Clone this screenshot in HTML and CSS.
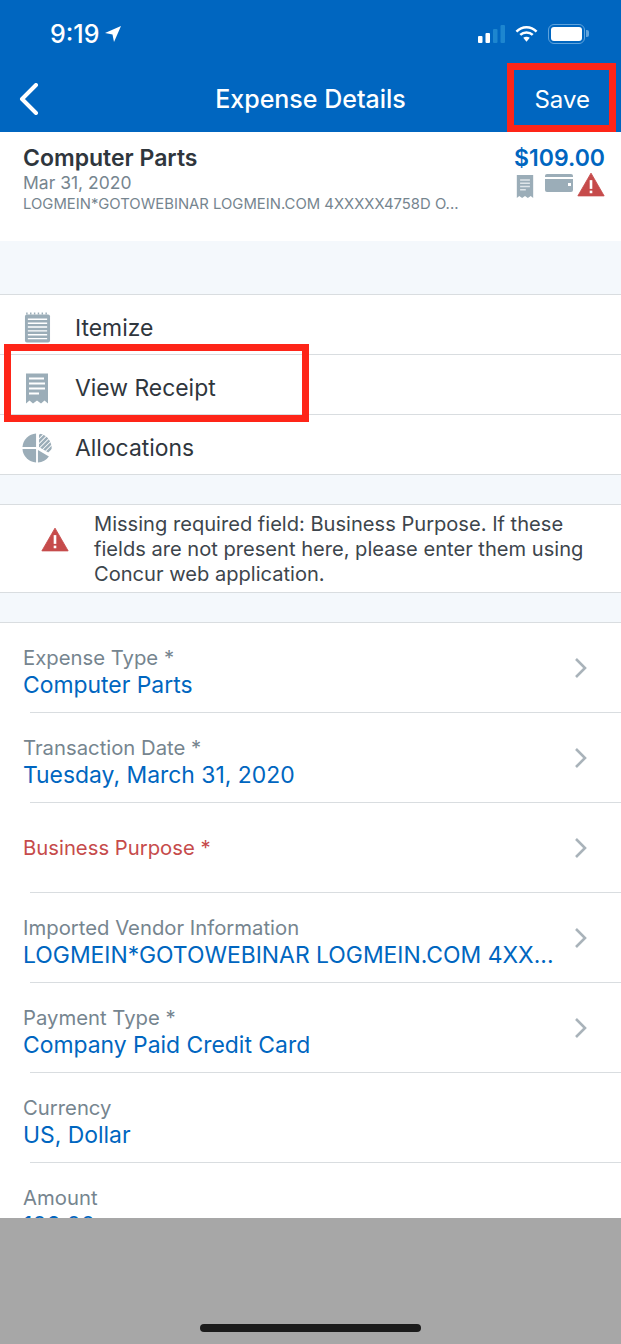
FILE: index.html
```html
<!DOCTYPE html>
<html lang="en">
<head>
    <meta charset="UTF-8">
    <meta name="viewport" content="width=device-width, initial-scale=1.0">
    <title>Expense Details</title>
    <link rel="stylesheet" href="styles.css">
</head>
<body>
    <div class="screen">
        <!-- Blue top bar -->
        <div class="top-bar">
            <div class="status-bar">
                <div class="status-time">
                    <span>9:19</span>
                    <svg class="icon-location" viewBox="0 0 16 16"><path d="M16 0 L0 7 L7.500 8.500 L9 16 Z" fill="#fff"/></svg>
                </div>
                <div class="status-icons">
                    <svg width="27" height="18" viewBox="0 0 27 18">
                        <rect x="0" y="11" width="4.500" height="7" rx="1" fill="#fff"/>
                        <rect x="7.500" y="8" width="4.500" height="10" rx="1" fill="#fff"/>
                        <rect x="15" y="4" width="4.500" height="14" rx="1" fill="#1d86cf"/>
                        <rect x="22.500" y="0" width="4.500" height="18" rx="1" fill="#1d86cf"/>
                    </svg>
                    <svg width="23" height="18" viewBox="0 0 24 18">
                        <path d="M1.500 6.500 C7.500 .5 16.500 .5 22.500 6.500" fill="none" stroke="#fff" stroke-width="2.600"/>
                        <path d="M5.500 10 C9 6.500 15 6.500 18.500 10" fill="none" stroke="#fff" stroke-width="2.600"/>
                        <path d="M8.600 13 C10.400 11.400 13.600 11.400 15.400 13 L12 17 Z" fill="#fff"/>
                    </svg>
                    <div class="battery"><div class="battery-fill"></div></div>
                </div>
            </div>
            <div class="nav-bar">
                <svg class="icon-back" viewBox="0 0 20 32"><path d="M17 2 L3 16 L17 30" fill="none" stroke="#fff" stroke-width="4" stroke-linecap="round" stroke-linejoin="round"/></svg>
                <h1>Expense Details</h1>
                <span class="nav-save">Save</span>
            </div>
        </div>

        <div class="content">
            <!-- Expense summary -->
            <div class="summary">
                <div class="summary-left">
                    <div class="summary-title">Computer Parts</div>
                    <div class="summary-date">Mar 31, 2020</div>
                    <div class="summary-desc">LOGMEIN*GOTOWEBINAR LOGMEIN.COM 4XXXXX4758D O...</div>
                </div>
                <div class="summary-right">
                    <div class="summary-amount">$109.00</div>
                    <div class="summary-icons">
                        <svg class="summary-receipt" width="18" height="25" viewBox="0 0 22 30">
                            <path d="M1 1 H21 V29 L18 26.500 L14.500 29 L11 26.500 L7.500 29 L4 26.500 L1 29 Z" fill="#9badb8"/>
                            <path d="M5 7 H17 M5 11 H17 M5 15 H17 M5 19 H12" stroke="#dfe5e9" stroke-width="1.800"/>
                        </svg>
                        <svg class="summary-card" width="28" height="18" viewBox="0 0 28 18">
                            <rect x="0" y="0" width="28" height="18" rx="2" fill="#9badb8"/>
                            <rect x="0" y="3" width="28" height="2" fill="#fff"/>
                            <rect x="23" y="9" width="3" height="3" fill="#fff"/>
                        </svg>
                        <svg class="summary-warn" width="28" height="25" viewBox="0 0 32 28">
                            <path d="M16 1 L31 27 H1 Z" fill="#c64b4b" stroke="#c64b4b" stroke-linejoin="round"/>
                            <rect x="14.500" y="9" width="3" height="10" fill="#fff"/>
                            <rect x="14.500" y="21" width="3" height="3" fill="#fff"/>
                        </svg>
                    </div>
                </div>
            </div>

            <div class="band band-top"></div>

            <!-- Actions -->
            <div class="actions">
                <div class="action-row">
                    <div class="action-icon">
                        <svg width="27" height="32" viewBox="0 0 28 32">
                            <rect x="1" y="2" width="26" height="29" rx="2" fill="#9badb8"/>
                            <path d="M3 2 V0 M7 2 V0 M11 2 V0 M15 2 V0 M19 2 V0 M23 2 V0" stroke="#9badb8" stroke-width="1.500"/>
                            <path d="M4 7 H24 M4 11 H24 M4 15 H24 M4 19 H24 M4 23 H24 M4 27 H24" stroke="#fff" stroke-width="1.500"/>
                        </svg>
                    </div>
                    <span>Itemize</span>
                </div>
                <div class="action-row">
                    <div class="action-icon">
                        <svg width="22" height="31" viewBox="0 0 22 30">
                            <path d="M0 0 H22 V30 L18.500 27 L15 30 L11 27 L7 30 L3.500 27 L0 30 Z" fill="#9badb8"/>
                            <path d="M3 5 H18 M3 10 H19 M3 15 H19 M3 20 H13" stroke="#fff" stroke-width="1.800"/>
                        </svg>
                    </div>
                    <span>View Receipt</span>
                </div>
                <div class="action-row action-row-pie">
                    <div class="action-icon">
                        <svg width="32" height="32" viewBox="0 0 32 32">
                            <defs>
                                <clipPath id="pieHatch"><path d="M18 .6 A15.500 15.500 0 0 1 30.400 22 L18 15 Z"/></clipPath>
                            </defs>
                            <path d="M15 .5 V15 H.5 A15.500 15.500 0 0 1 15 .5 Z" fill="#9badb8"/>
                            <path d="M.5 17 H15 V31.500 A15.500 15.500 0 0 1 .5 17 Z" fill="#9badb8"/>
                            <path d="M17 18 V31.500 A15.500 15.500 0 0 0 28.700 25 Z" fill="#9badb8"/>
                            <g clip-path="url(#pieHatch)">
                                <path d="M10 12 L22 0 M10 17 L27 0 M10 22 L32 0 M15 22 L37 0 M20 22 L42 0 M25 22 L47 0" stroke="#9badb8" stroke-width="2.600"/>
                            </g>
                        </svg>
                    </div>
                    <span>Allocations</span>
                </div>
            </div>

            <div class="band band-small"></div>

            <!-- Warning -->
            <div class="warning">
                <svg class="warning-icon" width="28" height="25" viewBox="0 0 32 28">
                    <path d="M16 1 L31 27 H1 Z" fill="#c64b4b" stroke="#c64b4b" stroke-linejoin="round"/>
                    <rect x="14.500" y="9" width="3" height="10" fill="#fff"/>
                    <rect x="14.500" y="21" width="3" height="3" fill="#fff"/>
                </svg>
                <p>Missing required field: Business Purpose. If these fields are not present here, please enter them using Concur web application.</p>
            </div>

            <div class="band band-small"></div>

            <!-- Fields -->
            <div class="fields">
                <div class="field">
                    <div class="field-text">
                        <div class="field-label">Expense Type *</div>
                        <div class="field-value">Computer Parts</div>
                    </div>
                    <svg class="chevron" viewBox="0 0 14 22"><path d="M2 2 L11 11 L2 20" fill="none" stroke="#a9b3ba" stroke-width="2.600"/></svg>
                </div>
                <div class="field">
                    <div class="field-text">
                        <div class="field-label">Transaction Date *</div>
                        <div class="field-value">Tuesday, March 31, 2020</div>
                    </div>
                    <svg class="chevron" viewBox="0 0 14 22"><path d="M2 2 L11 11 L2 20" fill="none" stroke="#a9b3ba" stroke-width="2.600"/></svg>
                </div>
                <div class="field">
                    <div class="field-text field-text-single">
                        <div class="field-label field-required">Business Purpose *</div>
                    </div>
                    <svg class="chevron" viewBox="0 0 14 22"><path d="M2 2 L11 11 L2 20" fill="none" stroke="#a9b3ba" stroke-width="2.600"/></svg>
                </div>
                <div class="field">
                    <div class="field-text">
                        <div class="field-label">Imported Vendor Information</div>
                        <div class="field-value">LOGMEIN*GOTOWEBINAR LOGMEIN.COM 4XX...</div>
                    </div>
                    <svg class="chevron" viewBox="0 0 14 22"><path d="M2 2 L11 11 L2 20" fill="none" stroke="#a9b3ba" stroke-width="2.600"/></svg>
                </div>
                <div class="field">
                    <div class="field-text">
                        <div class="field-label">Payment Type *</div>
                        <div class="field-value">Company Paid Credit Card</div>
                    </div>
                    <svg class="chevron" viewBox="0 0 14 22"><path d="M2 2 L11 11 L2 20" fill="none" stroke="#a9b3ba" stroke-width="2.600"/></svg>
                </div>
                <div class="field">
                    <div class="field-text">
                        <div class="field-label">Currency</div>
                        <div class="field-value">US, Dollar</div>
                    </div>
                </div>
                <div class="field">
                    <div class="field-text">
                        <div class="field-label">Amount</div>
                        <div class="field-value">109.00</div>
                    </div>
                </div>
            </div>
        </div>

        <div class="bottom-area">
            <div class="home-bar"></div>
        </div>

        <!-- Red annotation boxes -->
        <div class="mark mark-save"></div>
        <div class="mark mark-receipt"></div>
    </div>
</body>
</html>
```

FILE: styles.css
```css
* {
    box-sizing: border-box;
}

body {
    margin: 0;
    font-family: Inter, "Noto Sans", sans-serif;
    background-color: #fff;
}

.screen {
    position: relative;
    width: 621px;
    height: 1344px;
    display: flex;
    flex-direction: column;
    overflow: hidden;
}

.top-bar {
    height: 132px;
    flex-shrink: 0;
    background-color: #0066c0;
    color: #fff;
}

.status-bar {
    height: 66px;
    display: flex;
    justify-content: space-between;
    align-items: center;
    padding: 2px 36px 0 50px;
}

.status-time {
    display: flex;
    align-items: center;
    gap: 6px;
    font-size: 25px;
    font-weight: 500;
}

.icon-location {
    width: 16px;
    height: 16px;
}

.status-icons {
    display: flex;
    align-items: center;
    gap: 10px;
}

.battery {
    position: relative;
    width: 37px;
    height: 20px;
    border: 1.5px solid #5fa3dc;
    border-radius: 6px;
    padding: 2px;
}

.battery::after {
    content: "";
    position: absolute;
    right: -5px;
    top: 5px;
    width: 3px;
    height: 7px;
    background-color: #5fa3dc;
    border-radius: 0 2px 2px 0;
}

.battery-fill {
    width: 100%;
    height: 100%;
    background-color: #fff;
    border-radius: 3px;
}

.nav-bar {
    height: 66px;
    display: flex;
    align-items: center;
    justify-content: space-between;
    padding: 0 31px 0 19px;
    position: relative;
}

.icon-back {
    width: 20px;
    height: 32px;
}

.nav-bar h1 {
    position: absolute;
    left: 0;
    right: 0;
    margin: 0;
    text-align: center;
    font-size: 25px;
    font-weight: 500;
}

.nav-save {
    font-size: 24px;
}

.content {
    flex: 1;
    overflow: hidden;
}

.summary {
    height: 109px;
    display: flex;
    justify-content: space-between;
    padding: 12px 16px 0 23px;
}

.summary-title {
    font-size: 23px;
    font-weight: 600;
    color: #2f363d;
    line-height: 28px;
}

.summary-date {
    font-size: 17.500px;
    color: #76858f;
    line-height: 22px;
}

.summary-desc {
    font-size: 14.850px;
    color: #76858f;
    line-height: 20px;
}

.summary-right {
    display: flex;
    flex-direction: column;
    align-items: flex-end;
}

.summary-amount {
    font-size: 23px;
    font-weight: 600;
    color: #0066c0;
    line-height: 28px;
}

.summary-icons {
    display: flex;
    align-items: flex-start;
    margin-top: 2px;
}

.summary-receipt {
    margin-right: 11px;
}

.summary-card {
    margin-right: 4px;
}

.summary-warn {
    margin-top: -2px;
}

.band {
    background-color: #f4f8fc;
    border-bottom: 1px solid #d9dde0;
}

.band-top {
    height: 54px;
}

.band-small {
    height: 30px;
}

.actions {
    background-color: #fff;
}

.action-row {
    height: 60px;
    display: flex;
    align-items: center;
    padding: 7px 0 0 22px;
    font-size: 22.900px;
    color: #2f363d;
    border-bottom: 1px solid #d9dde0;
}

.action-row-pie {
    padding-top: 6px;
}

.action-icon {
    width: 30px;
    margin-right: 23px;
    display: flex;
    justify-content: center;
}

.warning {
    height: 88px;
    display: flex;
    align-items: center;
    padding: 0 30px 0 41px;
    border-bottom: 1px solid #d9dde0;
}

.warning-icon {
    flex-shrink: 0;
    margin: 0 25px 18px 0;
}

.warning p {
    margin: 0;
    padding-top: 1px;
    font-size: 20.100px;
    line-height: 25px;
    color: #3d454c;
}

.field {
    height: 90px;
    display: flex;
    justify-content: space-between;
    align-items: center;
    padding: 0 33px 0 23px;
    position: relative;
}

.field::after {
    content: "";
    position: absolute;
    left: 30px;
    right: 0;
    bottom: 0;
    height: 1px;
    background-color: #d9dde0;
}

.field-text {
    padding-top: 7px;
}

.field-text-single {
    padding-top: 0;
}

.field-label {
    font-size: 20.300px;
    line-height: 26px;
    color: #76858f;
}

.field-required {
    color: #c64b4b;
}

.field-value {
    font-size: 22.900px;
    line-height: 28px;
    color: #0066c0;
    white-space: nowrap;
}

.chevron {
    width: 14px;
    height: 22px;
    flex-shrink: 0;
    margin-bottom: 1px;
}

.bottom-area {
    height: 126px;
    flex-shrink: 0;
    background-color: #a7a7a7;
    position: relative;
}

.home-bar {
    position: absolute;
    left: 200px;
    bottom: 12px;
    width: 221px;
    height: 8px;
    background-color: #1b1b1b;
    border-radius: 4px;
}

.mark {
    position: absolute;
    border: 7px solid #fe2518;
}

.mark-save {
    left: 507px;
    top: 63px;
    width: 109px;
    height: 69px;
}

.mark-receipt {
    left: 4px;
    top: 344px;
    width: 305px;
    height: 78px;
}
```
